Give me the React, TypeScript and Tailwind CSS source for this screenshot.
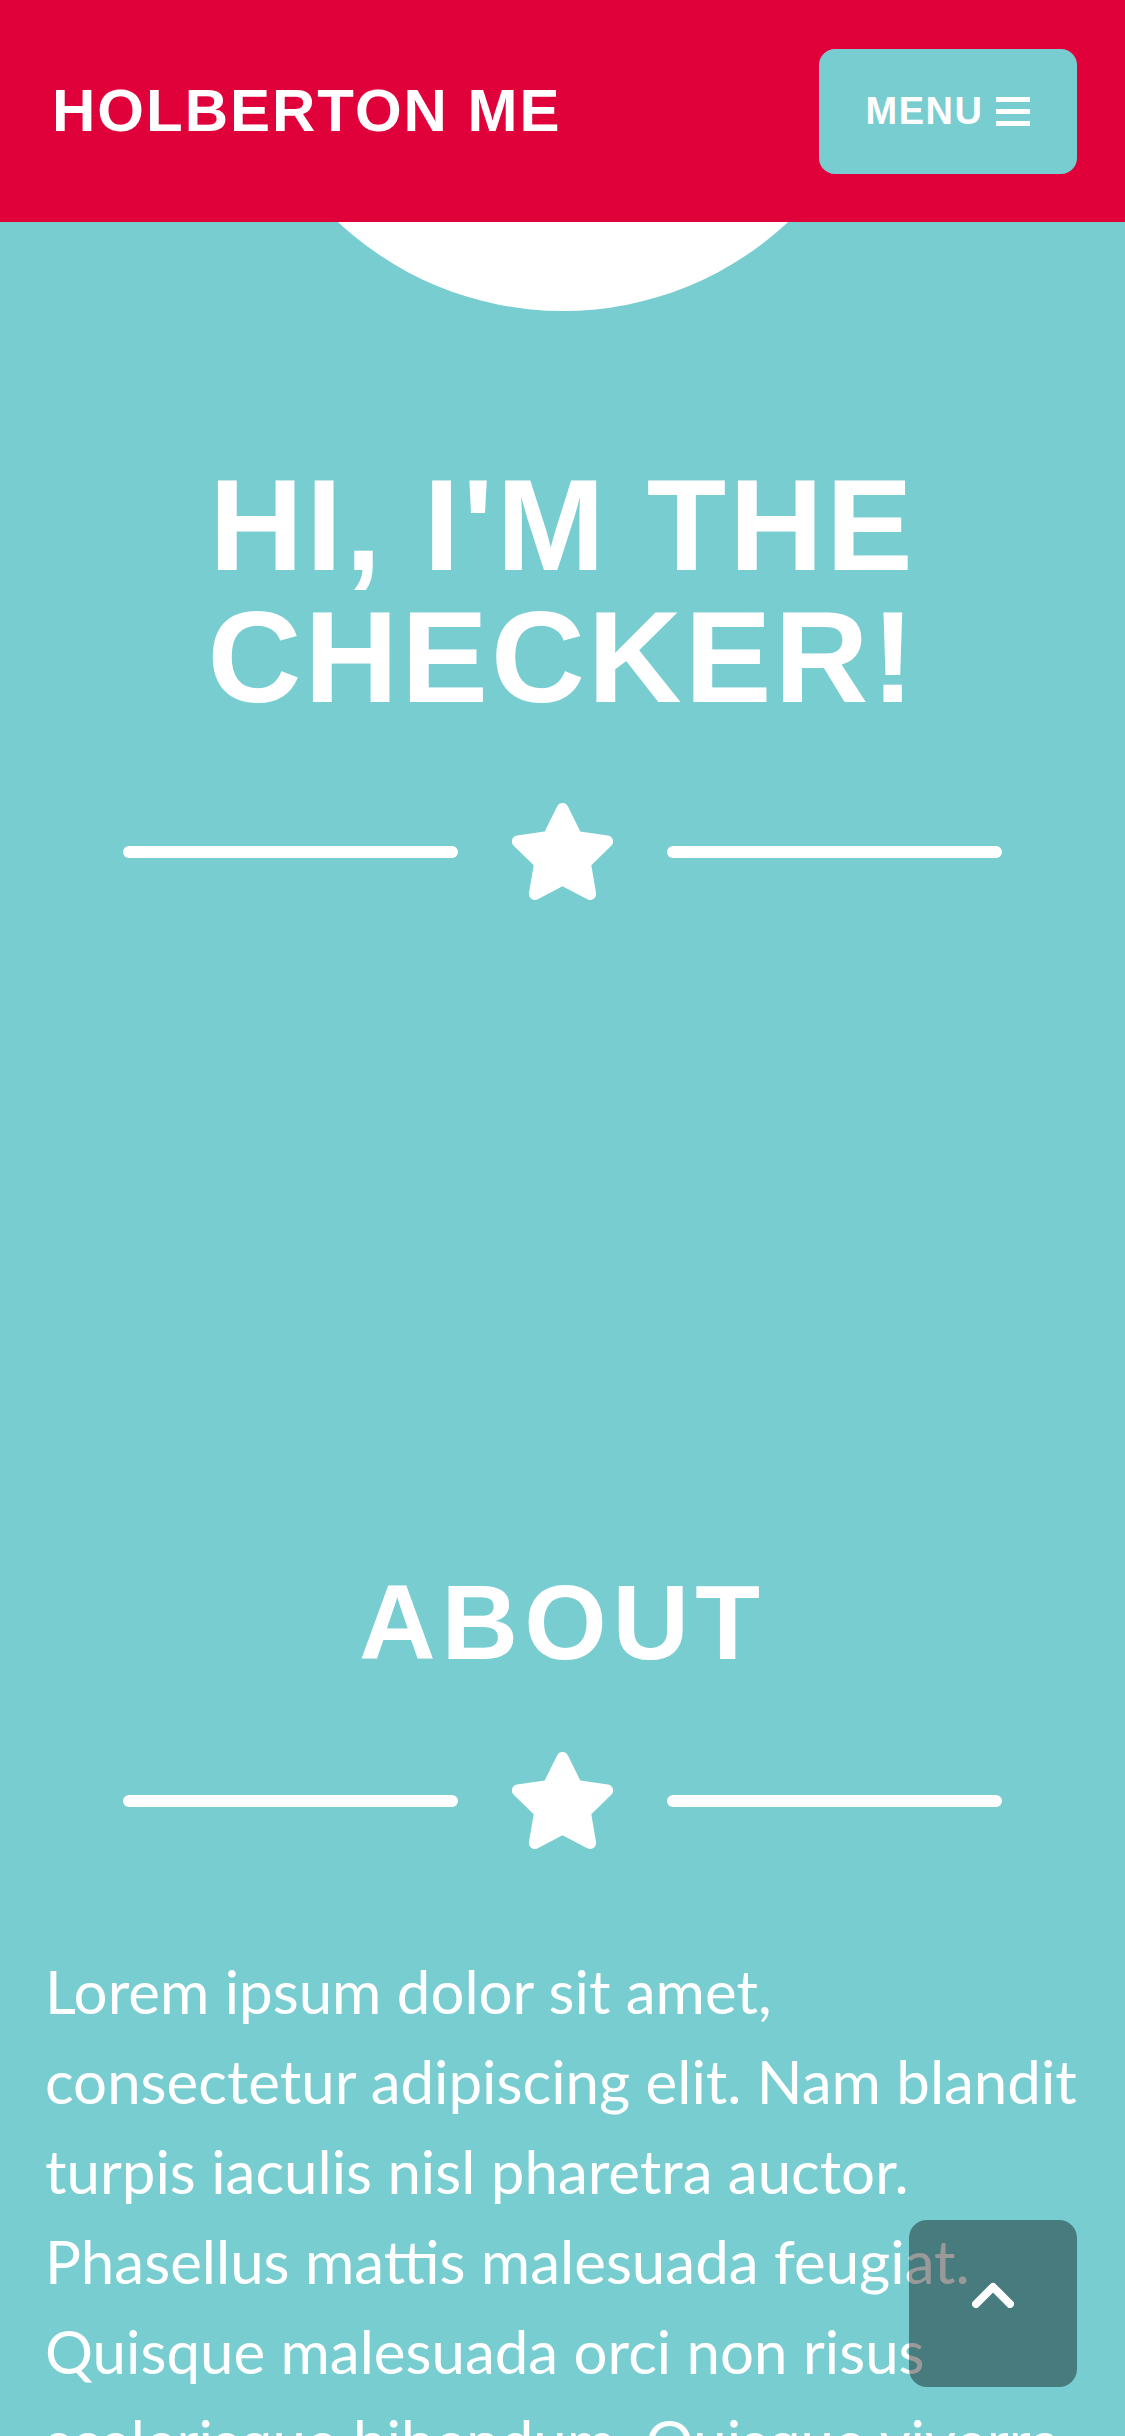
import { FaStar } from "react-icons/fa";

const heading = { fontFamily: '"Liberation Sans", Arial, sans-serif' };
const body = { fontFamily: 'Lato, "Open Sans", sans-serif' };

function StarDivider({ className = "" }: { className?: string }) {
  return (
    <div className={`flex items-center justify-center gap-[50px] ${className}`}>
      <span className="h-[12px] w-[335px] rounded-full bg-white" />
      <FaStar className="h-[97px] w-[109px] text-white" />
      <span className="h-[12px] w-[335px] rounded-full bg-white" />
    </div>
  );
}

export default function App() {
  return (
    <div className="relative h-[2436px] overflow-hidden bg-[#78cdd1] text-white">
      {/* Top bar */}
      <header className="relative z-10 flex h-[222px] items-center justify-between bg-[#e0003a] pl-[52px] pr-[48px]">
        <span className="text-[60px] font-bold uppercase leading-none tracking-[2px]" style={heading}>
          Holberton Me
        </span>
        <button className="flex h-[125px] w-[258px] items-center justify-center gap-[13px] rounded-[16px] bg-[#78cdd1]">
          <span className="text-[38px] font-bold uppercase leading-none tracking-[1.5px]" style={heading}>
            Menu
          </span>
          <span className="flex h-[29px] w-[34px] flex-col justify-between">
            <span className="h-[5px] w-full bg-white" />
            <span className="h-[5px] w-full bg-white" />
            <span className="h-[5px] w-full bg-white" />
          </span>
        </button>
      </header>

      {/* Hero */}
      <section className="flex flex-col items-center">
        <div className="-mt-[569px] h-[658px] w-[658px] rounded-full bg-white" />
        <h1
          className="mt-[148px] text-center text-[130px] font-bold uppercase leading-[132px] tracking-[3px]"
          style={heading}
        >
          Hi, I'm the
          <br />
          Checker!
        </h1>
        <StarDivider className="mt-[80px]" />
      </section>

      {/* About */}
      <section className="flex flex-col items-center">
        <h2
          className="mt-[664px] text-center text-[106px] font-bold uppercase leading-[117px] tracking-[6px]"
          style={heading}
        >
          About
        </h2>
        <StarDivider className="mt-[71px]" />
        <p className="mt-[97px] px-[45px] text-[60px] leading-[90px]" style={body}>
          Lorem ipsum dolor sit amet, consectetur adipiscing elit. Nam blandit turpis iaculis nisl pharetra
          auctor. Phasellus mattis malesuada feugiat. Quisque malesuada orci non risus scelerisque bibendum.
          Quisque viverra lacus at tellus dictum, a aliquam lectus ullamcorper.
        </p>
      </section>

      {/* Scroll to top */}
      <button className="absolute bottom-[49px] right-[48px] flex h-[167px] w-[168px] items-center justify-center rounded-[18px] bg-black/40 pb-[17px]">
        <svg width="42" height="26" viewBox="0 0 42 26" fill="none">
          <polyline
            points="4,22 21,5 38,22"
            stroke="white"
            strokeWidth="8"
            strokeLinecap="round"
            strokeLinejoin="round"
          />
        </svg>
      </button>
    </div>
  );
}
